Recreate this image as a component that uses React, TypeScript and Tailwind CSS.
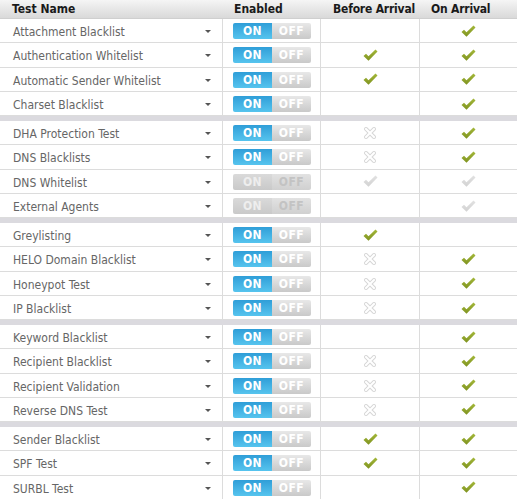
type Mark = "check" | "gray" | "x" | null;

interface TestRow {
  name: string;
  enabled: boolean;
  before: Mark;
  on: Mark;
}

const groups: TestRow[][] = [
  [
    { name: "Attachment Blacklist", enabled: true, before: null, on: "check" },
    { name: "Authentication Whitelist", enabled: true, before: "check", on: "check" },
    { name: "Automatic Sender Whitelist", enabled: true, before: "check", on: "check" },
    { name: "Charset Blacklist", enabled: true, before: null, on: "check" },
  ],
  [
    { name: "DHA Protection Test", enabled: true, before: "x", on: "check" },
    { name: "DNS Blacklists", enabled: true, before: "x", on: "check" },
    { name: "DNS Whitelist", enabled: false, before: "gray", on: "gray" },
    { name: "External Agents", enabled: false, before: null, on: "gray" },
  ],
  [
    { name: "Greylisting", enabled: true, before: "check", on: null },
    { name: "HELO Domain Blacklist", enabled: true, before: "x", on: "check" },
    { name: "Honeypot Test", enabled: true, before: "x", on: "check" },
    { name: "IP Blacklist", enabled: true, before: "x", on: "check" },
  ],
  [
    { name: "Keyword Blacklist", enabled: true, before: null, on: "check" },
    { name: "Recipient Blacklist", enabled: true, before: "x", on: "check" },
    { name: "Recipient Validation", enabled: true, before: "x", on: "check" },
    { name: "Reverse DNS Test", enabled: true, before: "x", on: "check" },
  ],
  [
    { name: "Sender Blacklist", enabled: true, before: "check", on: "check" },
    { name: "SPF Test", enabled: true, before: "check", on: "check" },
    { name: "SURBL Test", enabled: true, before: null, on: "check" },
  ],
];

const MarkIcon = ({ mark }: { mark: Mark }) => {
  if (mark === "check" || mark === "gray") {
    const top = mark === "check" ? "#a4b83a" : "#e2e2e2";
    const bottom = mark === "check" ? "#7f9320" : "#d2d2d2";
    const id = mark === "check" ? "chk-g" : "chk-n";
    return (
      <svg width="15" height="13" viewBox="0 0 15 13">
        <defs>
          <linearGradient id={id} x1="0" y1="0" x2="0" y2="1">
            <stop offset="0" stopColor={top} />
            <stop offset="1" stopColor={bottom} />
          </linearGradient>
        </defs>
        <path
          d="M0.5 7 L3 4.8 L5.5 7.2 L12.5 0.5 L14.5 2.5 L5.5 11.8 Z"
          fill={`url(#${id})`}
        />
      </svg>
    );
  }
  if (mark === "x") {
    return (
      <svg width="12" height="12" viewBox="0 0 12 12">
        <path d="M2 2 L10 10 M10 2 L2 10" stroke="#d6d6d6" strokeWidth="4" strokeLinecap="square" />
        <path d="M2 2 L10 10 M10 2 L2 10" stroke="#ffffff" strokeWidth="2" strokeLinecap="square" />
      </svg>
    );
  }
  return null;
};

const Toggle = ({ enabled }: { enabled: boolean }) => (
  <div className="flex h-4 w-[78px] overflow-hidden rounded-[2px] text-[12px] font-bold leading-4 tracking-[0.5px]">
    <div
      className={
        enabled
          ? "flex w-[39px] items-center justify-center bg-gradient-to-b from-[#2f9ed8] to-[#56c4ee] text-white"
          : "flex w-[39px] items-center justify-center bg-gradient-to-b from-[#dadada] to-[#c9c9c9] text-[#eeeeee]"
      }
    >
      ON
    </div>
    <div
      className={
        enabled
          ? "flex w-[39px] items-center justify-center bg-gradient-to-b from-[#e8e8e8] to-[#c9c9c9] text-white"
          : "flex w-[39px] items-center justify-center bg-gradient-to-b from-[#e2e2e2] to-[#d0d0d0] text-[#c3c3c3]"
      }
    >
      OFF
    </div>
  </div>
);

const Row = ({ row }: { row: TestRow }) => (
  <div className="flex h-[24.3px] border-b border-[#dcdcdc] bg-white">
    <div className="flex w-[223px] items-center justify-between border-r border-[#dcdcdc] pl-[13px] pr-[11px] text-[12px] text-[#666]">
      <span className="pt-[3px]">{row.name}</span>
      <span className="mt-[2px] h-0 w-0 border-x-[3px] border-t-[3px] border-x-transparent border-t-[#555]" />
    </div>
    <div className="flex w-[98px] items-center border-r border-[#dcdcdc] pl-[10px] pt-[1px]">
      <Toggle enabled={row.enabled} />
    </div>
    <div className="flex w-[99px] items-center justify-center border-r border-[#dcdcdc] pt-[1px]">
      <MarkIcon mark={row.before} />
    </div>
    <div className="flex flex-1 items-center justify-center pt-[1px]">
      <MarkIcon mark={row.on} />
    </div>
  </div>
);

const App = () => {
  return (
    <div
      className="h-[499px] w-[517px] overflow-hidden bg-white"
      style={{ fontFamily: "Tahoma, 'DejaVu Sans Condensed', 'Liberation Sans', sans-serif" }}
    >
      <div className="flex h-[19px] items-center border-b border-[#cfcfcf] bg-gradient-to-b from-[#f5f5f5] to-[#d9d9d9] text-[12px] font-bold text-[#1a1a1a]">
        <div className="w-[223px] pl-3">Test Name</div>
        <div className="w-[98px] pl-[11px]">Enabled</div>
        <div className="w-[99px] pl-3 tracking-[-0.2px]">Before Arrival</div>
        <div className="flex-1 pl-[11px] tracking-[-0.2px]">On Arrival</div>
      </div>
      {groups.map((group, gi) => (
        <div key={gi}>
          {gi > 0 && <div className="h-[4.8px] bg-[#dbdadf]" />}
          {group.map((row) => (
            <Row key={row.name} row={row} />
          ))}
        </div>
      ))}
    </div>
  );
};

export default App;
